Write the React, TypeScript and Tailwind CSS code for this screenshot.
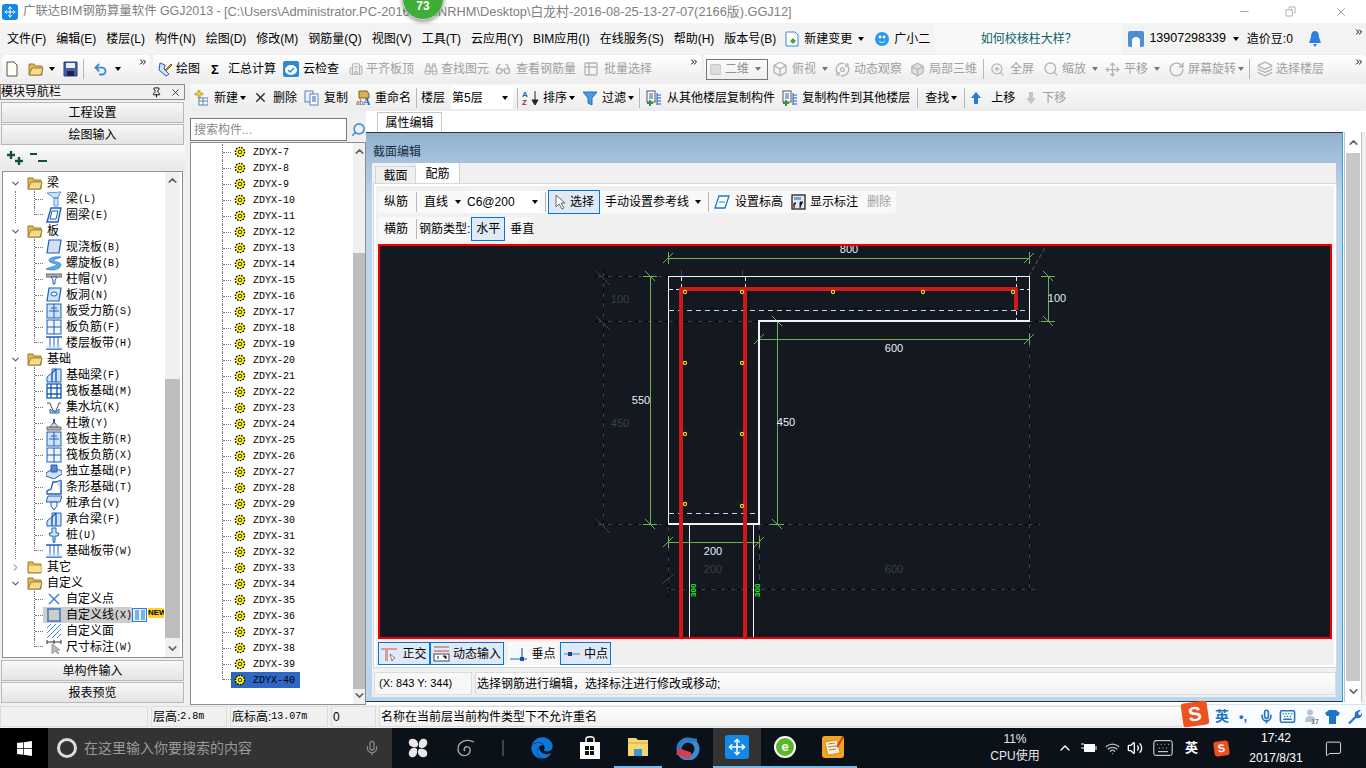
import React from "react";
import { Binoculars, Box, Building2, ChevronDown, ChevronRight, ChevronUp, ChevronsRight, Copy, Glasses, Keyboard, Layers, MessageSquare, Mic, Minus, Move, Orbit, Pin, RotateCw, Search, Square, Table2, Undo2, Volume2, Wifi, X, ZoomIn } from "lucide-react";
import { FaEdge, FaWindows } from "react-icons/fa";

const B = "#1f5fb8";
const L = "#cfe2f7";

const Caret = ({ m = "ml-[6px]", c = "border-t-black" }: { m?: string; c?: string }) => (
  <span className={`${m} w-0 h-0 shrink-0 border-x-[3.5px] border-x-transparent border-t-[4px] ${c}`} />
);
const Sep = ({ m = "ml-[6px]" }: { m?: string }) => <span className={`${m} w-px h-[20px] shrink-0 bg-[#b8b8b8]`} />;

const T = ({ icon, label, m = "", g = "gap-[4px]", off, caret }: { icon?: React.ReactNode; label: string; m?: string; g?: string; off?: boolean; caret?: string }) => (
  <span className={`flex items-center shrink-0 ${m} ${off ? "text-[#a0a0a0]" : "text-black"}`}>
    <span className={`flex items-center ${g}`}>
      {icon}
      <span>{label}</span>
    </span>
    {caret && <Caret m={caret} c={off ? "border-t-[#777]" : "border-t-black"} />}
  </span>
);

const Svg = ({ w = 16, children }: { w?: number; children: React.ReactNode }) => (
  <svg width={w} height={16} viewBox={`0 0 ${w} 16`} className="shrink-0">{children}</svg>
);

const NewDoc = () => <Svg w={12}><path d="M1 1h7l3 3v11H1z" fill="#fffdf0" stroke="#555" /></Svg>;
const Folder = ({ open = true }: { open?: boolean }) => (
  <Svg>
    <path d="M1 3h5l1 2h7v9H1z" fill="#e8b64a" stroke="#9a7a3a" />
    {open ? <path d="M1 14l3-7h11l-2 7z" fill="#f8dc8a" stroke="#9a7a3a" /> : <path d="M2 7h12v6H2z" fill="#fbe08a" />}
  </Svg>
);
const Save = () => (
  <Svg w={15}>
    <path d="M1 1h13v14H1z" fill="#3f5fb0" stroke="#2a3f80" />
    <path d="M3 2h9v5H3z" fill="#e8eef8" />
    <path d="M4 10h7v5H4z" fill="#202040" />
  </Svg>
);
const DrawIcon = () => (
  <Svg>
    <path d="M3 2l5 2-1 4 5 5-3 2-7-6z" fill={L} stroke={B} />
    <path d="M8 9l6-6 1 1-6 6z" fill="#e0a030" stroke="#886020" />
  </Svg>
);
const CloudCheck = () => (
  <svg width="16" height="16" viewBox="0 0 16 16" className="shrink-0">
    <rect x="0" y="0" width="16" height="16" rx="2" fill="#2a8ad8" />
    <ellipse cx="8" cy="9" rx="6" ry="5" fill="#fff" />
    <path d="M5 9l2 2 4-4" fill="none" stroke="#2a8ad8" strokeWidth="1.5" />
  </svg>
);
const NewIcon = () => (
  <Svg w={14}>
    <path d="M4 0h2v3h3v2H6v3H4V5H1V3h3z" fill="#f4d23c" stroke="#a08820" strokeWidth=".6" />
    <rect x="5" y="8" width="9" height="7" fill="#fff" stroke="#5580b8" />
    <path d="M5 11h9M9 8v7" stroke="#5580b8" />
  </Svg>
);
const Rename = () => (
  <Svg w={15}>
    <path d="M4 1h8l2 3v4H4z" fill="#d8b050" stroke="#806020" />
    <text x="1" y="15" fontSize="8" fontFamily="Liberation Serif" fill="#555">ab</text>
    <text x="8" y="15" fontSize="10" fontWeight="700" fontFamily="Liberation Serif" fill={B}>A</text>
  </Svg>
);
const Sort = () => (
  <Svg w={18}>
    <text x="0" y="7" fontSize="8" fontWeight="700" fontFamily="Liberation Sans" fill="#2a5fb0">A</text>
    <text x="0" y="15" fontSize="8" fontWeight="700" fontFamily="Liberation Sans" fill="#a03030">Z</text>
    <path d="M13 1v12M10 10l3 5 3-5z" stroke="#222" fill="#222" />
  </Svg>
);
const Funnel = () => <Svg w={14}><path d="M0 2h14L9 8v7L5 13V8z" fill="#4a9ae0" stroke="#2a70b0" /></Svg>;
const CopyFloor = () => (
  <Svg>
    <rect x="1" y="1" width="8" height="11" fill="#fff" stroke="#555" />
    <path d="M3 4h4M3 6h4M3 8h4" stroke={B} />
    <path d="M11 5h4M11 8h4M11 11h4M11 14h4M11 3v12" stroke={B} />
    <path d="M3 10h2v2h2v2H5v2H3v-2H1v-2h2z" fill="#2f9a3a" />
  </Svg>
);
const UpA = ({ c = "#2a7ad0" }: { c?: string }) => <Svg w={10}><path d="M5 2l5 6H7v6H3V8H0z" fill={c} /></Svg>;
const DownA = () => <Svg w={10}><path d="M5 14L0 8h3V2h4v6h3z" fill="#c4c4c4" /></Svg>;

const Gear = () => (
  <svg width="12" height="12" viewBox="0 0 12 12" className="shrink-0">
    <circle cx="6" cy="6" r="4.6" fill="#ffff00" stroke="#000" strokeWidth="1.4" strokeDasharray="1.6 1.2" />
    <circle cx="6" cy="6" r="1.8" fill="#ffff00" stroke="#222" />
  </svg>
);

const icons: Record<string, React.ReactNode> = {
  beam: <><path d="M1 2l14-1-3 5v9H8V7z" fill={L} stroke="#5a9ad8" /><path d="M8 7h4" stroke={B} /></>,
  ring: <><path d="M5 1h10l-3 14H1z" fill="#eef5fc" stroke={B} strokeWidth="1.4" /><path d="M6 4h6l-2 8H4z" fill="#fff" stroke={B} /></>,
  slab: <path d="M3 1h12l-2 13H1z" fill={L} stroke={B} strokeWidth="1.2" />,
  spiral: <path d="M15 2C6 1 1 4 4 7c3 2 7 1 6 3-2 2-6 2-10 4 6 2 14 1 15-4 0-3-6-3-7-4-1-2 4-2 7-4z" fill="#5aaaf0" stroke={B} strokeWidth=".6" />,
  cap: <><path d="M0 3h16v3H0z" fill="#b0b0b0" stroke="#666" /><path d="M5 6h6l-2 3v4H7V9z" fill="#fff" stroke={B} /></>,
  hole: <><path d="M3 1h12l-2 13H1z" fill={L} stroke={B} strokeWidth="1.2" /><ellipse cx="8" cy="7" rx="3" ry="2" fill="#fff" stroke={B} /></>,
  rebar: <><rect x="1" y="1" width="14" height="14" fill={L} stroke={B} /><path d="M8 1v14M3 8h10M5 5h6" stroke={B} /></>,
  neg: <><rect x="1" y="1" width="14" height="14" fill="#eef5fc" stroke={B} /><path d="M8 1v14M1 8h14" stroke={B} /></>,
  band: <><path d="M0 2h16M0 14h16" stroke={B} strokeWidth="1.4" /><path d="M4 2v12M8 2v12M12 2v12" stroke={B} /><path d="M0 10h16v4H0z" fill={L} opacity=".6" /></>,
  fbeam: <><path d="M1 15V10l5-4V2h9v13z" fill={L} stroke={B} /><path d="M6 6l4-4M10 2v13M6 6v9" stroke={B} strokeWidth="1.4" /></>,
  raft: <><rect x="1" y="1" width="14" height="14" fill="#fff" stroke={B} strokeWidth="1.4" /><path d="M1 5h14M1 11h14M5 1v14M11 1v14" stroke={B} strokeWidth="1.4" /></>,
  pit: <><path d="M1 4h3l3 8h3l3-8h2" fill="none" stroke="#555" /><path d="M4 10c3 4 6 4 9 0v4H4z" fill={L} stroke={B} /></>,
  pier: <><path d="M1 12h14v3H1z" fill="#b8b8b8" stroke="#666" /><path d="M4 12l3-4h2l3 4z" fill="#d8d8d8" stroke="#666" /><path d="M7 4h2v4H7z" fill={B} /></>,
  iso: <><path d="M0 10l8-5 8 3v3l-8 5-8-3z" fill={L} stroke={B} /><path d="M5 2h6v7H5z" fill="#5a8ad0" stroke={B} /></>,
  strip: <><path d="M1 15v-3l4-2 2-7h8v12z" fill="#fff" stroke={B} strokeWidth="1.3" /><path d="M10 3l5-2v12" fill={L} stroke={B} /></>,
  cap2: <><path d="M2 1h14l-2 6H0z" fill={L} stroke={B} /><path d="M5 7h6v4l-3 4-3-4z" fill="#eef5fc" stroke={B} /></>,
  pile: <><path d="M6 1h4v5h3l-1 3H9v5l-1 2-1-2V9H4L3 6h3z" fill={L} stroke={B} /></>,
  pt: <path d="M3 3l10 10M13 3L3 13" stroke="#2f7ad8" strokeWidth="1.4" />,
  line: <><rect x="2" y="2" width="12" height="12" fill="none" stroke={B} strokeWidth="1.2" /><rect x="1" y="1" width="2" height="2" fill="#3a8ae0" /><rect x="13" y="1" width="2" height="2" fill="#3a8ae0" /><rect x="1" y="13" width="2" height="2" fill="#3a8ae0" /><rect x="13" y="13" width="2" height="2" fill="#3a8ae0" /></>,
  hatch: <path d="M1 5l4-4M1 10l9-9M1 15L15 1M6 15l9-9M11 15l4-4" stroke="#3a8ae0" />,
  dim: <><path d="M1 3h14M1 1v4M15 1v4M8 1v4" stroke="#333" /><path d="M6 5v10l3-3 3 3 1-1-3-3h4z" fill="#bbb" stroke="#999" /></>,
};
const TI = ({ k }: { k: string }) => (
  <svg width="16" height="16" viewBox="0 0 16 16" className="shrink-0">{icons[k]}</svg>
);

type Node = { name: string; key2?: string; k: string };
const groups: { name: string; open: boolean; items: Node[] }[] = [
  { name: "梁", open: true, items: [{ name: "梁", key2: "(L)", k: "beam" }, { name: "圈梁", key2: "(E)", k: "ring" }] },
  { name: "板", open: true, items: [
    { name: "现浇板", key2: "(B)", k: "slab" }, { name: "螺旋板", key2: "(B)", k: "spiral" }, { name: "柱帽", key2: "(V)", k: "cap" },
    { name: "板洞", key2: "(N)", k: "hole" }, { name: "板受力筋", key2: "(S)", k: "rebar" }, { name: "板负筋", key2: "(F)", k: "neg" }, { name: "楼层板带", key2: "(H)", k: "band" },
  ] },
  { name: "基础", open: true, items: [
    { name: "基础梁", key2: "(F)", k: "fbeam" }, { name: "筏板基础", key2: "(M)", k: "raft" }, { name: "集水坑", key2: "(K)", k: "pit" }, { name: "柱墩", key2: "(Y)", k: "pier" },
    { name: "筏板主筋", key2: "(R)", k: "rebar" }, { name: "筏板负筋", key2: "(X)", k: "neg" }, { name: "独立基础", key2: "(P)", k: "iso" }, { name: "条形基础", key2: "(T)", k: "strip" },
    { name: "桩承台", key2: "(V)", k: "cap2" }, { name: "承台梁", key2: "(F)", k: "fbeam" }, { name: "桩", key2: "(U)", k: "pile" }, { name: "基础板带", key2: "(W)", k: "band" },
  ] },
  { name: "其它", open: false, items: [] },
  { name: "自定义", open: true, items: [{ name: "自定义点", k: "pt" }, { name: "自定义线", key2: "(X)", k: "line" }, { name: "自定义面", k: "hatch" }, { name: "尺寸标注", key2: "(W)", k: "dim" }] },
];

const NavTree = () => (
  <div className="flex-1 min-w-0 pt-[3px]">
    {groups.map((g, gi) => {
      const lastGroup = gi === groups.length - 1;
      return (
        <div key={g.name}>
          <div className="h-4 flex items-center">
            <span className="w-[24px] pl-[7px] shrink-0">
              {g.open ? <ChevronDown size={11} strokeWidth={2.4} className="text-[#555]" /> : <ChevronRight size={11} strokeWidth={2.4} className="text-[#aaa]" />}
            </span>
            <Folder open={g.open} />
            <span className="ml-[4px] text-[12px]">{g.name}</span>
          </div>
          {g.items.map((n, i) => {
            const last = i === g.items.length - 1;
            const sel = n.name === "自定义线";
            return (
              <div key={n.name} className="h-4 flex items-center">
                <span className={`ml-[12px] w-[19px] h-full shrink-0 ${lastGroup ? "" : "border-l border-dotted border-[#777]"}`} />
                <span className={`w-[9px] shrink-0 border-l border-dotted border-[#777] flex ${last ? "h-1/2 self-start items-end" : "h-full items-center"}`}>
                  <span className="w-full border-t border-dotted border-[#777]" />
                </span>
                <span className={`flex items-center h-full w-[89px] pl-[3px] shrink-0 ${sel ? "bg-[#cdcdcd]" : ""}`}>
                  <TI k={n.k} />
                  <span className="ml-[4px] text-[12px] whitespace-nowrap">{n.name}</span>
                  {n.key2 && <span className="font-['Liberation_Mono',monospace] text-[10px]">{n.key2}</span>}
                </span>
                {sel && (
                  <>
                    <span className="w-[15px] h-[14px] shrink-0 border border-[#2f7ad8] bg-[#e4f0fb] flex justify-center gap-[2px] px-[1px] py-[1px]">
                      <span className="w-[4px] bg-[#7ab0e8]" />
                      <span className="w-[4px] bg-[#7ab0e8]" />
                    </span>
                    <span className="ml-[1px] w-[16px] overflow-hidden h-[10px] self-start mt-[1px] bg-[#ffd21e] text-[8px] leading-[10px] font-bold font-['Liberation_Sans',sans-serif]">NEW</span>
                  </>
                )}
              </div>
            );
          })}
        </div>
      );
    })}
  </div>
);

const Scroll = ({ w, top, bar }: { w: string; top: string; bar: string }) => (
  <div className={`${w} shrink-0 h-full flex flex-col items-center bg-[#f0f0f0]`}>
    <ChevronUp size={13} strokeWidth={3} className="text-[#666] shrink-0 my-[2px]" />
    <div className={`${top} w-full shrink-0`} />
    <div className={`${bar} w-full bg-[#bdbdbd] shrink-0`} />
    <ChevronDown size={13} strokeWidth={3} className="text-[#666] shrink-0 mt-auto mb-[2px]" />
  </div>
);

const NavBtn = ({ label }: { label: string }) => (
  <div className="h-[21px] mx-[1px] flex items-center justify-center border border-[#b8b8b8] bg-linear-to-b from-[#f8f8f8] to-[#e4e4e4] text-[12px]">{label}</div>
);

const LeftPanel = () => (
  <div className="w-[185px] shrink-0 h-full flex flex-col">
    <div className="h-[16px] flex items-center border border-[#8a8a8a] bg-[#f0f0f0] text-[12px] pr-[3px]">
      <span className="leading-none">模块导航栏</span>
      <Pin size={11} className="ml-auto text-black" />
      <X size={11} className="ml-[8px] text-[#333]" />
    </div>
    <div className="h-[2px]" />
    <NavBtn label="工程设置" />
    <div className="h-px" />
    <NavBtn label="绘图输入" />
    <div className="h-[25px] flex items-center gap-[6px] pl-[6px] bg-linear-to-b from-[#fafafa] to-[#e8e8e8]">
      <svg width="18" height="16" viewBox="0 0 18 16"><path d="M1 5h8M5 1v8M9 11h8M13 7v8" stroke="#0f4f45" strokeWidth="2.4" /></svg>
      <svg width="18" height="16" viewBox="0 0 18 16"><path d="M0 4h7M8 11h9" stroke="#0f4f45" strokeWidth="2.2" /></svg>
    </div>
    <div className="h-[1px]" />
    <div className="h-[487px] mx-[2px] border border-[#8e8e8e] bg-white flex pr-[2px]">
      <NavTree />
      <Scroll w="w-[15px]" top="h-[190px]" bar="h-[259px]" />
    </div>
    <div className="h-[2px]" />
    <NavBtn label="单构件输入" />
    <div className="h-px" />
    <NavBtn label="报表预览" />
  </div>
);

const CompTree = () => (
  <div className="w-[176px] shrink-0 h-full flex flex-col">
    <div className="h-[31px] shrink-0 pt-[7px] flex">
      <div className="w-[157px] h-[23px] border border-[#777] bg-white flex items-center pl-[3px] text-[#8a8a8a] text-[12px]">搜索构件...</div>
      <Search size={15} strokeWidth={2.6} className="ml-[4px] mt-[4px] text-[#4a90d8] scale-x-[-1]" />
    </div>
    <div className="flex-1 min-h-0 border border-[#8e8e8e] bg-white flex overflow-hidden">
      <div className="flex-1 min-w-0 pt-[1px]">
        {Array.from({ length: 34 }, (_, i) => i + 7).map((n) => {
          const last = n === 40;
          return (
            <div key={n} className="h-4 flex items-center">
              <span className={`ml-[31px] w-[9px] shrink-0 border-l border-dotted border-[#777] flex ${last ? "h-1/2 self-start items-end" : "h-full items-center"}`}>
                <span className="w-full border-t border-dotted border-[#777]" />
              </span>
              <span className={`flex items-center h-full w-[69px] pl-[3px] shrink-0 ${last ? "bg-[#2f68c4]" : ""}`}>
                <Gear />
                <span className="ml-[7px] font-['Liberation_Mono',monospace] text-[10px] text-black">ZDYX-{n}</span>
              </span>
            </div>
          );
        })}
      </div>
      <Scroll w="w-[12px]" top="h-[93px]" bar="h-[436px]" />
    </div>
  </div>
);

const Dim = ({ x1, y1, x2, y2 }: { x1: number; y1: number; x2: number; y2: number }) => {
  const g = "#6fb04a";
  if (y1 === y2) {
    return (
      <g stroke={g} fill="none">
        <path d={`M${x1} ${y1}H${x2}M${x1} ${y1 - 6}V${y1 + 6}M${x2} ${y1 - 6}V${y1 + 6}`} shapeRendering="crispEdges" />
        <path d={`M${x1 - 5} ${y1 + 5}L${x1 + 5} ${y1 - 5}M${x2 - 5} ${y1 + 5}L${x2 + 5} ${y1 - 5}`} />
      </g>
    );
  }
  return (
    <g stroke={g} fill="none">
      <path d={`M${x1} ${y1}V${y2}M${x1 - 7} ${y1}H${x1 + 7}M${x1 - 7} ${y2}H${x1 + 7}`} shapeRendering="crispEdges" />
      <path d={`M${x1 - 5} ${y1 - 5}L${x1 + 5} ${y1 + 5}M${x1 - 5} ${y2 - 5}L${x1 + 5} ${y2 + 5}`} />
    </g>
  );
};

const dots = [[685, 292], [742, 292], [833, 292], [923, 292], [1013, 292], [685, 363], [742, 363], [685, 434], [742, 434], [685, 504], [742, 506]];
const labels: [number, number, string, string][] = [
  [849, 253, "800", "#e8eef5"], [1057, 302, "100", "#dfe8f5"], [894, 352, "600", "#e8eef5"], [641, 404, "550", "#e8eef5"], [786, 426, "450", "#e8eef5"], [713, 555, "200", "#e8eef5"],
  [620, 303, "100", "#3a4048"], [620, 427, "450", "#3a4048"], [713, 573, "200", "#3a4048"], [894, 573, "600", "#3a4048"],
];

const Canvas = () => (
  <div className="h-[395px] border-2 border-[#f00000] bg-[#141821] shrink-0">
    <svg width="950" height="391" viewBox="380 246 950 391" className="block font-['Liberation_Sans',sans-serif]">
      <g fill="none" stroke="#3c424c" strokeDasharray="7 3" shapeRendering="crispEdges">
        <path d="M595 276H668M595 321H1040M595 524H1040M603 270V530M668 524V597M759 524V597M1029 321V590M668 589H1035M681 270V276M742 270V276" />
      </g>
      <g fill="none" stroke="#000" strokeDasharray="3 7" shapeRendering="crispEdges">
        <path d="M595 276H668M595 321H1040M595 524H1040M603 270V530M668 524V597M759 330V597M1029 321V590M668 589H1035" />
      </g>
      <path d="M1029 276L1046 246" stroke="#666" strokeDasharray="4 3" />
      <path d="M596 271l14 14M596 316l14 14M596 519l14 14M662 584l12-10" stroke="#3c424c" />
      <path d="M669 310.5H1029M669 513.5H759" stroke="#bcd8f5" strokeDasharray="5 4" shapeRendering="crispEdges" />
      <path d="M669 289.5H680M1020 289.5H1029M681.5 277V287M745.5 277V287M1016.5 277V287M1016.5 311V321" stroke="#dfe8f5" strokeDasharray="4 3" shapeRendering="crispEdges" />
      <Dim x1={668} y1={258} x2={1029} y2={258} />
      <Dim x1={650} y1={276} x2={650} y2={524} />
      <Dim x1={777} y1={321} x2={777} y2={524} />
      <Dim x1={1048} y1={276} x2={1048} y2={321} />
      <Dim x1={759} y1={339} x2={1029} y2={339} />
      <Dim x1={668} y1={542} x2={759} y2={542} />
      <path d="M668.5 276.5H1029.5V321H759V524H668.5Z" fill="none" stroke="#f2f2f2" strokeWidth="1.6" shapeRendering="crispEdges" />
      <path d="M689.5 525V637M753.5 525V637" stroke="#f2f2f2" shapeRendering="crispEdges" />
      <path d="M681 637V289H1016V310M745 289V637" fill="none" stroke="#cf1a1d" strokeWidth="4" strokeLinejoin="round" />
      {dots.map(([x, y]) => (
        <circle key={`${x}-${y}`} cx={x} cy={y} r="1.6" fill="#141821" stroke="#ffd820" strokeWidth="1.1" />
      ))}
      {labels.map(([x, y, t, c]) => (
        <text key={`${x}-${y}`} x={x} y={y} fontSize="11" textAnchor="middle" fill={c}>{t}</text>
      ))}
      <text transform="translate(696 597) rotate(-90)" fontSize="8" fontWeight="700" fill="#20f020">300</text>
      <text transform="translate(760 597) rotate(-90)" fontSize="8" fontWeight="700" fill="#20f020">300</text>
    </svg>
  </div>
);

const Pick = ({ label, icon, w }: { label: string; icon: React.ReactNode; w: string }) => (
  <span className={`${w} h-[23px] shrink-0 flex items-center justify-center gap-[3px] border border-[#0078d7] bg-[#dfeaf6]`}>
    {icon}
    <span>{label}</span>
  </span>
);

const Dialog = () => (
  <div className="w-[977px] shrink-0 h-[570px] border-t border-t-[#333] border-b border-b-[#333] border-r border-r-[#2aa4d8] bg-linear-to-b from-[#93b2d0] to-[#bdd6f0] from-0% to-[12%] flex flex-col">
    <div className="h-[30px] shrink-0 pl-[7px] flex items-center text-[12px] text-[#1a2a3a] pt-[7px]">截面编辑</div>
    <div className="ml-[6px] mr-[6px] h-[534px] shrink-0 bg-[#f0f0f0] flex flex-col">
      <div className="h-[21px] shrink-0 flex items-end pl-[3px]">
        <span className="w-[41px] h-[18px] flex items-center justify-center bg-[#f0f0f0] border border-b-0 border-[#d4d4d4]">截面</span>
        <span className="w-[44px] h-[21px] flex items-center justify-center bg-white border-r border-[#d4d4d4]">配筋</span>
      </div>
      <div className="ml-[2px] h-[483px] shrink-0 border-2 border-white outline outline-[#d8d8d8] px-[2px] pt-[5px] flex flex-col">
        <div className="w-[518px] h-[22px] shrink-0 bg-[#f8f8f8] rounded-[2px] flex items-center pl-[6px]">
          <span className="shrink-0">纵筋</span>
          <Sep m="ml-[8px]" />
          <T label="直线" m="ml-[7px]" caret="ml-[7px]" />
          <span className="ml-[4px] w-[75px] h-[22px] shrink-0 bg-white flex items-center pl-[2px] pr-[2px] font-['Liberation_Sans',sans-serif]">
            <span>C6@200</span>
            <Caret m="ml-auto" />
          </span>
          <Sep m="ml-[5px]" />
          <span className="ml-[2px] w-[52px] h-[24px] shrink-0 flex items-center justify-center gap-[2px] border border-[#0078d7] bg-[#dfeaf6]">
            <svg width="14" height="16" viewBox="0 0 14 16"><path d="M2 1v12l3-3 3 5 2-1-3-5h4z" fill="#fff" stroke="#666" /></svg>
            <span>选择</span>
          </span>
          <T label="手动设置参考线" m="ml-[5px]" caret="ml-[6px]" />
          <Sep m="ml-[7px]" />
          <T m="ml-[5px]" g="gap-[5px]" label="设置标高" icon={<Svg><path d="M5 2h10l-4 12H1z" fill="#fff" stroke="#1a7ad8" strokeWidth="1.3" /><path d="M5 8h6" stroke="#1a7ad8" /></Svg>} />
          <T m="ml-[8px]" label="显示标注" icon={<Svg w={15}><rect x="1" y="1" width="13" height="14" fill="#dfe8f4" stroke="#222" strokeWidth="1.3" /><path d="M3 14V9h2M9 14V8h3" stroke="#222" /><rect x="3" y="3" width="7" height="3" fill="#7aa0d8" /><rect x="2" y="10" width="2" height="2" fill="#d02020" /></Svg>} />
          <span className="ml-[9px] shrink-0 text-[#a0a0a0]">删除</span>
        </div>
        <div className="w-[153px] h-[24px] mt-[4px] shrink-0 bg-[#f8f8f8] rounded-[2px] flex items-center pl-[6px]">
          <span className="shrink-0">横筋</span>
          <Sep m="ml-[8px]" />
          <span className="ml-[2px] shrink-0">钢筋类型:</span>
          <span className="ml-[1px] w-[34px] h-[24px] shrink-0 flex items-center justify-center border border-[#0078d7] bg-[#dfeaf6]">水平</span>
          <span className="ml-[5px] shrink-0">垂直</span>
        </div>
        <div className="h-[3px] shrink-0" />
        <Canvas />
        <div className="h-[25px] shrink-0 flex items-center mt-[2px]">
          <Pick w="w-[52px]" label="正交" icon={<svg width="18" height="16" viewBox="0 0 18 16"><path d="M0 2h16v2H7v11H4V4H0z" fill="#d89a9a" /><path d="M9 8l5 4-2 1-1 2z" fill="#fff" stroke="#555" strokeWidth=".7" /></svg>} />
          <Pick w="w-[74px]" label="动态输入" icon={<svg width="17" height="16" viewBox="0 0 17 16"><path d="M1 1h15M1 5h15" stroke="#b05050" /><rect x="1" y="8" width="15" height="7" fill="#fff" stroke="#444" /><path d="M5 10v3M10 10h3v3" stroke="#222" /></svg>} />
          <span className="ml-[4px] w-[50px] h-[23px] bg-[#f8f8f8] flex items-center justify-center gap-[3px]">
            <svg width="18" height="16" viewBox="0 0 18 16"><path d="M0 13h17M12 2v11" stroke="#2a5fb0" strokeWidth="1.2" /><rect x="10" y="11" width="4" height="4" fill="#1f4fa0" /></svg>
            <span>垂点</span>
          </span>
          <span className="ml-[2px]"><Pick w="w-[51px]" label="中点" icon={<svg width="18" height="16" viewBox="0 0 18 16"><path d="M1 8h16" stroke="#4a7ac0" /><rect x="5" y="6" width="4" height="4" fill="#1f3f90" /></svg>} /></span>
        </div>
      </div>
      <div className="h-[5px] shrink-0" />
      <div className="h-[23px] shrink-0 flex gap-[3px]">
        <div className="w-[98px] border border-[#dcdcdc] bg-[#f7f7f7] ml-[2px] flex items-center pl-[4px] text-[11px] font-['Liberation_Sans',sans-serif]">(X: 843 Y: 344)</div>
        <div className="flex-1 border border-[#dcdcdc] bg-linear-to-b from-white to-[#f0f0f0] flex items-center pl-[1px]">选择钢筋进行编辑，选择标注进行修改或移动;</div>
      </div>
    </div>
  </div>
);

const Sogou = ({ size, text }: { size: string; text: string }) => (
  <span className={`${size} bg-[#f0501e] rounded-[3px] rotate-[-8deg] flex items-center justify-center text-white font-bold font-['Liberation_Sans',sans-serif] shrink-0`}>
    <span className={text}>S</span>
  </span>
);

const Under = ({ children, w, on, bg = "" }: { children: React.ReactNode; w: string; on?: boolean; bg?: string }) => (
  <span className={`${w} ${bg} h-full shrink-0 flex items-center justify-center ${on ? "border-b-2 border-b-[#76b9ed]" : ""}`}>{children}</span>
);

export default function App() {
  return (
    <div className="w-[1366px] h-[768px] relative overflow-hidden flex flex-col bg-[#f0f0f0] text-[12px] text-black whitespace-nowrap font-['Liberation_Sans','Noto_Sans_CJK_SC',sans-serif]">
      {/* title bar */}
      <div className="h-[23px] shrink-0 bg-white flex items-center pl-[2px] text-[#808080]">
        <span className="w-[16px] h-[16px] rounded-[3px] bg-[#1388e8] flex items-center justify-center shrink-0"><Move size={12} className="text-white" /></span>
        <span className="ml-[5px] w-[201px] shrink-0 text-[12.4px]">广联达BIM钢筋算量软件 GGJ2013 - </span>
        <span className="text-[12.8px]">[C:\Users\Administrator.PC-20160823NRHM\Desktop\白龙村-2016-08-25-13-27-07(2166版).GGJ12]</span>
        <Minus size={13} strokeWidth={1} className="ml-auto text-[#555]" />
        <Copy size={11} strokeWidth={1} className="ml-[34px] text-[#555] scale-x-[-1]" />
        <X size={14} strokeWidth={1} className="ml-[38px] mr-[18px] text-[#555]" />
      </div>

      {/* menu */}
      <div className="h-[31px] shrink-0 flex items-center bg-[#f3f3f3] pl-[7px]">
        <div className="flex gap-[10px] whitespace-nowrap">
          {["文件(F)", "编辑(E)", "楼层(L)", "构件(N)", "绘图(D)", "修改(M)", "钢筋量(Q)", "视图(V)", "工具(T)", "云应用(Y)", "BIM应用(I)", "在线服务(S)", "帮助(H)", "版本号(B)"].map((m) => <span key={m}>{m}</span>)}
        </div>
        <T m="ml-[8px]" label="新建变更" caret="ml-[6px]" icon={<Svg><path d="M2 1h9l3 3v11H2z" fill="#fff" stroke="#3a8ad8" /><path d="M6 10l3-3 3 3-3 3z" fill="#4aa040" /></Svg>} />
        <T m="ml-[10px]" label="广小二" icon={<Svg><ellipse cx="8" cy="8" rx="7" ry="7" fill="#2a9ae8" /><circle cx="6" cy="6" r="1.4" fill="#fff" /><circle cx="10" cy="6" r="1.4" fill="#fff" /><path d="M5 10c2 2 4 2 6 0" stroke="#fff" fill="none" /></Svg>} />
        <span className="ml-[5px] w-[187px] h-[29px] shrink-0 bg-[#f8f8f8] rounded-[2px] flex items-center justify-center text-[#0a5f68]">如何校核柱大样？</span>
        <span className="ml-[6px] w-[16px] h-[16px] rounded-[2px] bg-[#4a90d0] flex items-end justify-center shrink-0"><span className="w-[8px] h-[10px] bg-white rounded-t-full" /></span>
        <span className="ml-[5px] text-[12.5px]">13907298339</span>
        <Caret m="ml-[7px]" />
        <span className="ml-[8px]">造价豆:0</span>
        <svg width="14" height="18" viewBox="0 0 14 18" className="ml-[15px] shrink-0"><path d="M7 1c3 0 4 3 4 6l2 6H1l2-6c0-3 1-6 4-6z" fill="#2a80e0" /><path d="M5 14h4l-2 3z" fill="#2a80e0" /></svg>
        <ChevronsRight size={10} strokeWidth={2.4} className="ml-auto mr-[2px] self-start mt-[4px]" />
      </div>

      {/* main toolbar */}
      <div className="h-[30px] shrink-0 flex py-px">
        <div className="w-[148px] shrink-0 ml-[2px] rounded-[3px] bg-linear-to-b from-white to-[#ececec] flex items-center pl-[4px]">
          <NewDoc />
          <span className="ml-[10px]"><Folder /></span>
          <Caret m="ml-[5px]" />
          <span className="ml-[8px]"><Save /></span>
          <Sep m="ml-[5px]" />
          <Undo2 size={15} strokeWidth={3} className="ml-[9px] text-[#3a8ad8]" />
          <Caret m="ml-[7px]" />
          <ChevronsRight size={10} strokeWidth={2.4} className="ml-auto mr-[2px] self-start mt-[2px]" />
        </div>
        <div className="w-[548px] shrink-0 ml-[3px] rounded-[3px] bg-linear-to-b from-white to-[#ececec] flex items-center pl-[4px]">
          <T g="gap-[3px]" label="绘图" icon={<DrawIcon />} />
          <T m="ml-[11px]" g="gap-[8px]" label="汇总计算" icon={<span className="w-[9px] font-bold text-[13px] leading-none">Σ</span>} />
          <T m="ml-[7px]" label="云检查" icon={<CloudCheck />} />
          <T m="ml-[10px]" g="gap-[3px]" off label="平齐板顶" icon={<Building2 size={14} className="text-[#b4b4b4]" />} />
          <T m="ml-[10px]" g="gap-[3px]" off label="查找图元" icon={<Binoculars size={14} className="text-[#b4b4b4]" />} />
          <T m="ml-[6px]" g="gap-[5px]" off label="查看钢筋量" icon={<Glasses size={16} className="text-[#b4b4b4]" />} />
          <T m="ml-[7px]" g="gap-[5px]" off label="批量选择" icon={<Table2 size={16} className="text-[#b4b4b4]" />} />
          <ChevronsRight size={10} strokeWidth={2.4} className="ml-auto mr-[2px] self-start mt-[2px]" />
        </div>
        <div className="flex-1 ml-[3px] rounded-[3px] bg-linear-to-b from-white to-[#ececec] flex items-center pl-[2px]">
          <span className="w-[62px] h-[21px] shrink-0 border border-[#777] flex items-center pl-[2px] gap-[3px] text-[#909090]">
            <Square size={13} className="text-[#c8c8c8] fill-[#dedede]" />二维
            <Caret m="ml-[3px]" c="border-t-[#777]" />
          </span>
          <T m="ml-[4px]" off label="俯视" caret="ml-[6px]" icon={<Box size={16} className="text-[#b4b4b4]" />} />
          <T m="ml-[7px]" off label="动态观察" icon={<Orbit size={15} className="text-[#b4b4b4]" />} />
          <T m="ml-[8px]" off label="局部三维" icon={<Box size={15} className="text-[#b4b4b4] fill-[#e0e0e0]" />} />
          <Sep m="ml-[6px]" />
          <T m="ml-[6px]" g="gap-[5px]" off label="全屏" icon={<ZoomIn size={15} className="text-[#b4b4b4]" />} />
          <T m="ml-[9px]" g="gap-[3px]" off label="缩放" caret="ml-[6px]" icon={<Search size={16} className="text-[#b4b4b4]" />} />
          <T m="ml-[7px]" off label="平移" caret="ml-[6px]" icon={<Move size={15} className="text-[#b4b4b4]" />} />
          <T m="ml-[8px]" g="gap-[3px]" off label="屏幕旋转" caret="ml-[2px]" icon={<RotateCw size={17} className="text-[#b4b4b4]" />} />
          <Sep m="ml-[5px]" />
          <T m="ml-[7px]" g="gap-[3px]" off label="选择楼层" icon={<Layers size={16} className="text-[#b4b4b4]" />} />
          <ChevronsRight size={10} strokeWidth={2.4} className="ml-auto mr-[2px] self-start mt-[2px]" />
        </div>
      </div>

      {/* body */}
      <div className="h-[621px] shrink-0 flex">
        <LeftPanel />
        <div className="w-[5px] shrink-0" />
        <div className="flex-1 min-w-0 flex flex-col">
          <div className="h-[27px] shrink-0 rounded-[3px] bg-linear-to-b from-[#fafafa] to-[#ececec] flex items-center pl-[4px]">
            <T g="gap-[6px]" label="新建" caret="ml-[2px]" icon={<NewIcon />} />
            <T m="ml-[7px]" g="gap-[5px]" label="删除" icon={<X size={15} strokeWidth={2.4} className="text-[#333]" />} />
            <T m="ml-[7px]" g="gap-[5px]" label="复制" icon={<Svg w={15}><rect x="1" y="1" width="8" height="11" fill="#e8f0fa" stroke="#5a80b8" /><rect x="6" y="4" width="8" height="11" fill="#fff" stroke="#5a80b8" /><path d="M8 7h4M8 9h4M8 11h4" stroke={B} /></Svg>} />
            <T m="ml-[7px]" g="gap-[5px]" label="重命名" icon={<Rename />} />
            <Sep m="ml-[5px]" />
            <span className="ml-[4px] shrink-0">楼层</span>
            <span className="ml-[6px] w-[62px] h-[23px] shrink-0 bg-white flex items-center pl-[1px] pr-[5px]">第5层<Caret m="ml-auto" /></span>
            <Sep m="ml-[4px]" />
            <T m="ml-[4px]" g="gap-[3px]" label="排序" caret="ml-[2px]" icon={<Sort />} />
            <T m="ml-[8px]" g="gap-[5px]" label="过滤" caret="ml-[2px]" icon={<Funnel />} />
            <Sep m="ml-[5px]" />
            <T m="ml-[6px]" g="gap-[5px]" label="从其他楼层复制构件" icon={<CopyFloor />} />
            <T m="ml-[7px]" label="复制构件到其他楼层" icon={<CopyFloor />} />
            <Sep m="ml-[7px]" />
            <T m="ml-[7px]" label="查找" caret="ml-[2px]" />
            <Sep m="ml-[7px]" />
            <T m="ml-[6px]" g="gap-[10px]" label="上移" icon={<UpA />} />
            <T m="ml-[11px]" g="gap-[6px]" off label="下移" icon={<DownA />} />
          </div>
          <div className="h-[594px] shrink-0 flex">
            <CompTree />
            <div className="flex-1 min-w-0 flex flex-col bg-white">
              <div className="h-[21px] shrink-0 bg-white pl-[11px] flex items-end">
                <span className="w-[65px] h-[20px] border border-b-0 border-[#c8c8c8] flex items-center justify-center">属性编辑</span>
              </div>
              <div className="h-[573px] flex">
                <Dialog />
                <div className="w-[18px] ml-[1px] h-[570px] shrink-0 border-x border-[#c0c0c0] flex flex-col items-center bg-white px-px">
                  <ChevronUp size={13} strokeWidth={3} className="text-[#666] shrink-0 my-[4px]" />
                  <div className="flex-1 w-full bg-[#c8c8c8]" />
                  <ChevronDown size={13} strokeWidth={3} className="text-[#666] shrink-0 my-[4px]" />
                </div>
                <div className="flex-1 bg-[#f0f0f0]" />
              </div>
            </div>
          </div>
        </div>
      </div>

      {/* status */}
      <div className="h-[23px] shrink-0 flex items-stretch gap-[3px] py-[1px] bg-[#f0f0f0] whitespace-nowrap">
        <span className="w-[148px] border border-[#dcdcdc]" />
        <span className="w-[76px] border border-[#dcdcdc] flex items-center pl-[1px]">层高:<span className="font-['Liberation_Mono',monospace] text-[10px]">2.8m</span></span>
        <span className="w-[98px] border border-[#dcdcdc] flex items-center pl-[1px]">底标高:<span className="font-['Liberation_Mono',monospace] text-[10px]">13.07m</span></span>
        <span className="w-[45px] border border-[#dcdcdc] flex items-center pl-[1px]">0</span>
        <span className="flex-1 border border-[#dcdcdc] bg-linear-to-b from-white to-[#f0f0f0] flex items-center pl-[1px]">名称在当前层当前构件类型下不允许重名</span>
      </div>

      {/* taskbar */}
      <div className="h-[40px] shrink-0 bg-[#0a1118] flex items-center text-white">
        <div className="w-[48px] h-full bg-black flex items-center justify-center"><FaWindows size={17} /></div>
        <div className="w-[344px] h-full bg-[#333] flex items-center text-[14px] text-[#9a9a9a] pl-[9px]">
          <span className="w-[20px] h-[20px] rounded-full border-[3px] border-[#ddd] shrink-0" />
          <span className="ml-[7px] whitespace-nowrap">在这里输入你要搜索的内容</span>
          <Mic size={16} className="ml-auto mr-[12px] text-[#888]" />
        </div>
        <div className="flex h-full ml-[2px]">
          <Under w="w-[48px]"><svg width="22" height="22" viewBox="0 0 22 22"><g fill="#e8e8e8"><path d="M10 10C3 11 1 7 2 4s6-3 8 0 1 4 0 6z" /><path d="M12 10c-1-7 3-9 6-8s3 6 0 8-4 1-6 0z" /><path d="M12 12c7-1 9 3 8 6s-6 3-8 0-1-4 0-6z" /><path d="M10 12c1 7-3 9-6 8s-3-6 0-8 4-1 6 0z" /></g></svg></Under>
          <Under w="w-[48px]"><svg width="20" height="20" viewBox="0 0 20 20" fill="none" stroke="#aaa" strokeWidth="1.3"><path d="M18 4C10 0 2 4 2 11c0 5 5 8 9 6 4-2 4-7 1-8-3-1-5 2-3 4" /></svg></Under>
          <span className="ml-[12px] mr-[14px] w-[2px] h-[16px] self-center bg-[#444]" />
          <Under w="w-[48px]"><FaEdge size={22} className="text-[#0a78d8]" /></Under>
          <Under w="w-[48px]"><svg width="22" height="24" viewBox="0 0 22 24"><path d="M1 6h20v17H1z" fill="#fff" /><path d="M7 6V3c0-3 8-3 8 0v3" fill="none" stroke="#fff" strokeWidth="1.5" /><path d="M6 10h4v4H6zM11 10h4v4h-4zM6 15h4v4H6zM11 15h4v4h-4z" fill="#111" /></svg></Under>
          <Under w="w-[48px]" on><svg width="22" height="20" viewBox="0 0 22 20"><path d="M1 1h8l2 2h10v16H1z" fill="#f5d76e" /><path d="M1 5h20v2H1z" fill="#e8c050" /><path d="M7 12h8v7H7z" fill="#3a9ad8" /></svg></Under>
          <Under w="w-[51px]"><svg width="24" height="24" viewBox="0 0 24 24"><circle cx="12" cy="13" r="9" fill="none" stroke="#3a8ad0" strokeWidth="5" /><path d="M5 19a9 9 0 0 1 8-15h8" fill="none" stroke="#2a78c8" strokeWidth="3" /><rect x="1" y="14" width="14" height="7" rx="1" transform="rotate(20 8 17)" fill="#d04050" /></svg></Under>
          <Under w="w-[48px]" on bg="bg-[#333]"><span className="w-[24px] h-[24px] rounded-[3px] bg-[#1388e8] flex items-center justify-center"><Move size={18} className="text-white" /></span></Under>
          <Under w="w-[48px]" on><span className="w-[22px] h-[22px] rounded-full bg-[#5ab82a] border-2 border-white flex items-center justify-center text-[13px] font-bold">e</span></Under>
          <Under w="w-[48px]" on><svg width="24" height="24" viewBox="0 0 24 24"><rect x="1" y="1" width="22" height="22" rx="3" fill="#f2a41e" /><path d="M4 7l12-2 3 13-12 2z" fill="#fbeecf" stroke="#a07020" strokeWidth=".6" /><path d="M7 9l7-1M7 12l8-1M8 15l7-1" stroke="#a08050" /><path d="M16 12l6-10" stroke="#c04a1a" strokeWidth="2" /></svg></Under>
        </div>
        <div className="ml-auto flex items-center h-full">
          <div className="w-[60px] flex flex-col items-center leading-[17px] text-[12px] text-[#e8e8e8]"><span>11%</span><span>CPU使用</span></div>
          <ChevronUp size={16} className="ml-[12px] text-white" />
          <svg width="16" height="12" viewBox="0 0 16 12" className="ml-[8px]"><rect x="3" y="2" width="11" height="8" fill="#fff" /><path d="M0 2h3M0 6h3" stroke="#fff" /><path d="M15 4v4" stroke="#fff" /></svg>
          <Wifi size={15} className="ml-[8px] text-[#bbb]" />
          <Volume2 size={16} className="ml-[7px] text-white" />
          <Keyboard size={22} strokeWidth={1} className="ml-[8px] w-[24px] text-white" />
          <span className="ml-[10px] text-[13px] font-bold">英</span>
          <span className="ml-[16px]"><Sogou size="w-[15px] h-[15px]" text="text-[11px]" /></span>
          <div className="ml-[9px] w-[76px] flex flex-col items-center leading-[20px] text-[12px]"><span>17:42</span><span>2017/8/31</span></div>
          <MessageSquare size={17} strokeWidth={1.2} className="ml-[11px] mr-[24px] text-white" />
        </div>
      </div>

      {/* update badge over the title bar */}
      <div className="absolute left-[402px] top-[-22px] w-[42px] h-[42px] rounded-full bg-[#3fae36] border border-[#cfd8cf] shadow-[0_2px_4px_rgba(0,0,0,0.4)] flex items-end justify-center pb-[4px] text-white text-[12px] font-bold">73</div>

      {/* input method bar */}
      <div className="absolute left-[1184px] top-[704px] w-[182px] h-[24px] bg-[#f8fbff] border-t border-l border-[#d8e4f0] flex items-center text-[#1f74c8] pl-[30px]">
        <span className="text-[14px] font-bold">英</span>
        <span className="ml-[10px] w-[9px] text-[13px] font-bold leading-none">•,</span>
        <Mic size={15} strokeWidth={2.6} className="ml-[11px]" />
        <Keyboard size={17} strokeWidth={2.2} className="ml-[5px]" />
        <svg width="15" height="15" viewBox="0 0 15 15" className="ml-[8px]">
          <circle cx="6" cy="3.5" r="3" fill="#b8c4d4" />
          <path d="M1 13c0-4 2-6 5-6s4 1 5 2v4z" fill="#b8c4d4" />
          <text x="7" y="14.5" fontSize="7" fontWeight="700" fill="#6a7a8c" fontFamily="Liberation Sans">17</text>
        </svg>
        <svg width="15" height="14" viewBox="0 0 15 14" className="ml-[6px]"><path d="M4 0h7l4 3-2 3h-2v8H4V6H2L0 3z" fill="#1f74c8" /></svg>
        <svg width="15" height="15" viewBox="0 0 15 15" className="ml-[7px]"><path d="M1 14l7-7c-1-4 2-6 6-6l-3 3 1 2 2 0 1-3c1 4-2 7-6 6l-6 6z" fill="#1f74c8" /></svg>
      </div>
      <div className="absolute left-[1182px] top-[702px]"><Sogou size="w-[26px] h-[24px]" text="text-[20px]" /></div>
    </div>
  );
}
